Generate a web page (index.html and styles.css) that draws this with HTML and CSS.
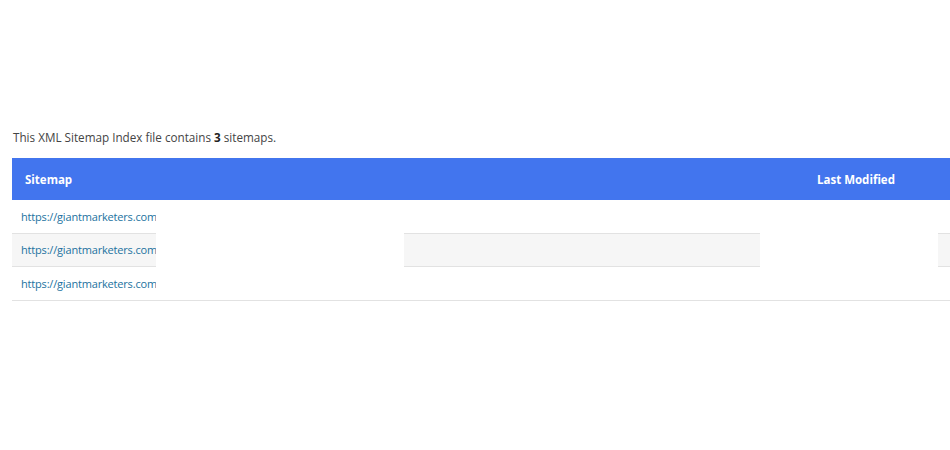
FILE: index.html
```html
<!DOCTYPE html>
<html>
<head>
<meta charset="utf-8">
<link rel="stylesheet" href="styles.css">
</head>
<body>
<div class="page">
  <p class="intro">This XML Sitemap Index file contains <strong>3</strong> sitemaps.</p>
  <div class="table-wrap">
    <table class="sitemaps">
      <thead>
        <tr><th class="col-loc">Sitemap</th><th class="col-mod">Last Modified</th></tr>
      </thead>
      <tbody>
        <tr><td><a href="#">https://giantmarketers.com/post-sitemap.xml</a></td><td></td></tr>
        <tr class="alt"><td><a href="#">https://giantmarketers.com/page-sitemap.xml</a></td><td></td></tr>
        <tr><td><a href="#">https://giantmarketers.com/category-sitemap.xml</a></td><td></td></tr>
      </tbody>
    </table>
    <div class="mask mask-a"></div>
    <div class="mask mask-b"></div>
  </div>
</div>
</body>
</html>
```
FILE: styles.css
```css
html, body {
  margin: 0;
  padding: 0;
  background: #fff;
  overflow: hidden;
}
body {
  font-family: "Open Sans", "Noto Sans", sans-serif;
  font-size: 12px;
  color: #333;
}
.page {
  padding: 128px 0 0 12px;
  width: 1000px;
}
.intro {
  margin: 0 0 12px 1px;
  line-height: 18px;
  font-size: 11.7px;
  color: #444;
}
.intro strong { font-weight: 700; color: #222; }
.table-wrap { position: relative; }
.sitemaps {
  width: 1000px;
  border-collapse: collapse;
}
.sitemaps th {
  background: #4275ee;
  color: #fff;
  font-weight: 700;
  font-size: 11.5px;
  text-align: left;
  height: 42px;
  padding: 0 13px;
}
.sitemaps th.col-mod { width: 182px; padding-left: 5px; }
.sitemaps td {
  height: 32.6px;
  padding: 0 9px;
  border-bottom: 1px solid #e2e2e2;
  font-size: 11px;
}
.sitemaps tr.alt td { background: #f6f6f6; }
.sitemaps a {
  color: #2272a0;
  text-decoration: none;
  letter-spacing: -0.18px;
}
.mask {
  position: absolute;
  background: #fff;
  top: 43px;
  height: 97px;
}
.mask-a { left: 144px; width: 248px; }
.mask-b { left: 748px; width: 178px; }
```
